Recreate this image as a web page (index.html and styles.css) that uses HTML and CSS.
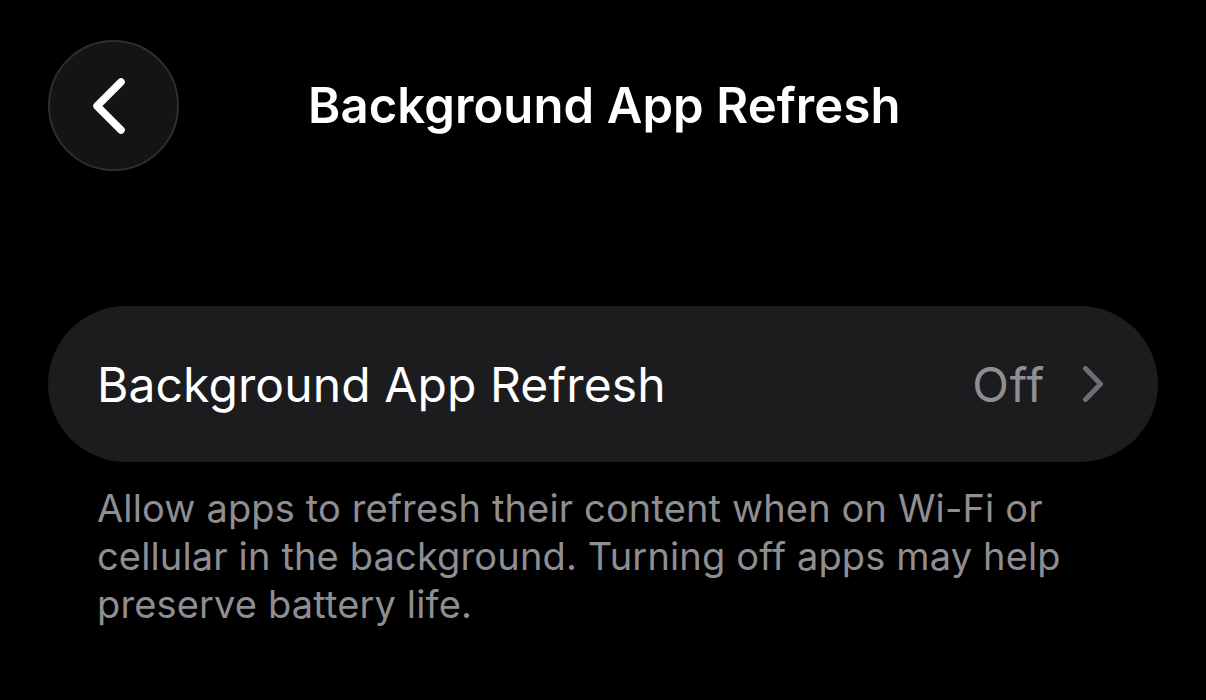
FILE: index.html
```html
<!DOCTYPE html>
<html lang="en">
<head>
<meta charset="utf-8">
<title>Background App Refresh</title>
<link rel="stylesheet" href="styles.css">
</head>
<body>
<div class="screen">
  <header class="nav">
    <button class="back" aria-label="Back">
      <svg viewBox="0 0 34 56" width="34" height="56">
        <path d="M29 4 L5 28 L29 52" fill="none" stroke="#fff" stroke-width="7.5" stroke-linecap="round" stroke-linejoin="round"/>
      </svg>
    </button>
    <h1 class="title">Background App Refresh</h1>
  </header>

  <section class="group">
    <div class="row">
      <span class="row-label">Background App Refresh</span>
      <span class="row-value">Off</span>
      <svg class="chev" viewBox="0 0 22 38" width="22" height="38">
        <path d="M3.5 3.5 L18.5 19 L3.5 34.5" fill="none" stroke="#6d6d72" stroke-width="5" stroke-linecap="round" stroke-linejoin="round"/>
      </svg>
    </div>
    <p class="footer">Allow apps to refresh their content when on Wi-Fi or cellular in the background. Turning off apps may help preserve battery life.</p>
  </section>
</div>
</body>
</html>
```

FILE: styles.css
```css
* { box-sizing: border-box; }

html, body {
  margin: 0;
  background: #000;
  color: #fff;
  font-family: Inter, "Noto Sans", "Liberation Sans", sans-serif;
}

.screen {
  width: 1206px;
  height: 700px;
  padding: 40px 48px 0;
}

.nav {
  display: flex;
  align-items: center;
  height: 131px;
}

.back {
  width: 131px;
  height: 131px;
  border-radius: 50%;
  background: #141414;
  border: 2px solid #2e2e2e;
  display: flex;
  align-items: center;
  justify-content: center;
  padding: 0 9px 0 0;
  flex: none;
}

.title {
  margin: 0 0 0 129px;
  font-size: 49px;
  font-weight: 600;
  letter-spacing: 0.1px;
}

.group {
  margin-top: 135px;
}

.row {
  height: 156px;
  border-radius: 78px;
  background: #1c1c1e;
  display: flex;
  align-items: center;
  padding: 0 54px 0 49px;
}

.row-label {
  flex: 1;
  font-size: 48px;
  font-weight: 400;
  letter-spacing: 0.1px;
}

.row-value {
  font-size: 48px;
  color: #8e8e93;
  margin-right: 37px;
  letter-spacing: 0.8px;
}

.chev { flex: none; }

.footer {
  margin: 22px 0 0 49px;
  width: 1000px;
  font-size: 38px;
  line-height: 48px;
  letter-spacing: 0.15px;
  color: #8e8e93;
}
```
